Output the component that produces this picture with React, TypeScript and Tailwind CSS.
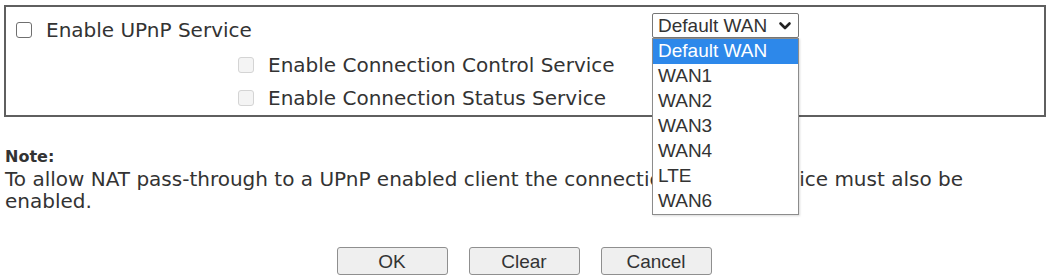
import { ReactNode } from "react";

const wanOptions = ["Default WAN", "WAN1", "WAN2", "WAN3", "WAN4", "LTE", "WAN6"];

function Box({ disabled }: { disabled?: boolean }) {
	return (
		<span
			className={
				disabled
					? "block w-[16px] h-[16px] rounded-[3px] border border-[#d4d4d4] bg-[#f4f4f4] shrink-0"
					: "block w-[16px] h-[16px] rounded-[3px] border border-[#6f6f6f] bg-white shrink-0"
			}
		/>
	);
}

function Check({ label, disabled }: { label: ReactNode; disabled?: boolean }) {
	return (
		<div className="flex items-center">
			<Box disabled={disabled} />
			<span className="ml-[14px] whitespace-nowrap">{label}</span>
		</div>
	);
}

function Chevron() {
	return (
		<svg width="14" height="10" viewBox="0 0 14 10" className="shrink-0">
			<path d="M2.5 2.5 L7 7 L11.5 2.5" fill="none" stroke="#222" strokeWidth="2.6" strokeLinecap="round" strokeLinejoin="round" />
		</svg>
	);
}

function WanSelect() {
	return (
		<div className="relative self-start mt-[6px] w-[147px] font-['Liberation_Sans',Arial,sans-serif] text-[19px] text-[#333]">
			<div className="h-[25px] flex items-center justify-between pl-[5px] pr-[6px] border border-[#767676] rounded-[2px] bg-white">
				<span className="leading-none">Default WAN</span>
				<Chevron />
			</div>
			{/* open list, drawn over the note below */}
			<div className="absolute left-0 top-full w-[147px] z-10 bg-white border border-[#8c8c8c] shadow-[1px_1px_2px_rgba(0,0,0,0.15)]">
				{wanOptions.map((o, i) => (
					<div
						key={o}
						className={
							i === 0
								? "h-[25px] flex items-center pl-[5px] bg-[#2d88ea] text-white"
								: "h-[25px] flex items-center pl-[5px]"
						}
					>
						{o}
					</div>
				))}
			</div>
		</div>
	);
}

function Btn({ children }: { children: ReactNode }) {
	return (
		<button className="w-[111px] h-[28px] border border-[#8f8f8f] rounded-[3px] bg-[#efefef] text-[19px] leading-none text-[#333] font-['Liberation_Sans',Arial,sans-serif]">
			{children}
		</button>
	);
}

export default function App() {
	return (
		<div className="w-[1048px] h-[279px] bg-white overflow-hidden font-['DejaVu_Sans',Verdana,sans-serif] text-[20px] text-[#333]">
			<div className="mt-[5px] ml-[4px] mr-[2px] h-[112px] border-2 border-[#5f5f5f]">
				<div className="flex h-[41px]">
					<div className="w-[646px] pl-[10px] pt-[5px] flex items-center">
						<Check label="Enable UPnP Service" />
					</div>
					<WanSelect />
				</div>
				<div className="h-[33px] pl-[232px] flex items-center">
					<Check disabled label="Enable Connection Control Service" />
				</div>
				<div className="h-[33px] pl-[232px] flex items-center">
					<Check disabled label="Enable Connection Status Service" />
				</div>
			</div>

			<div className="mt-[29px] px-[5px] leading-[22px]">
				<div className="font-bold text-[16px]">Note:</div>
				<p className="max-w-[975px]">
					To allow NAT pass-through to a UPnP enabled client the connection control service must also be enabled.
				</p>
			</div>

			<div className="mt-[35px] flex justify-center gap-[21px]">
				<Btn>OK</Btn>
				<Btn>Clear</Btn>
				<Btn>Cancel</Btn>
			</div>
		</div>
	);
}
